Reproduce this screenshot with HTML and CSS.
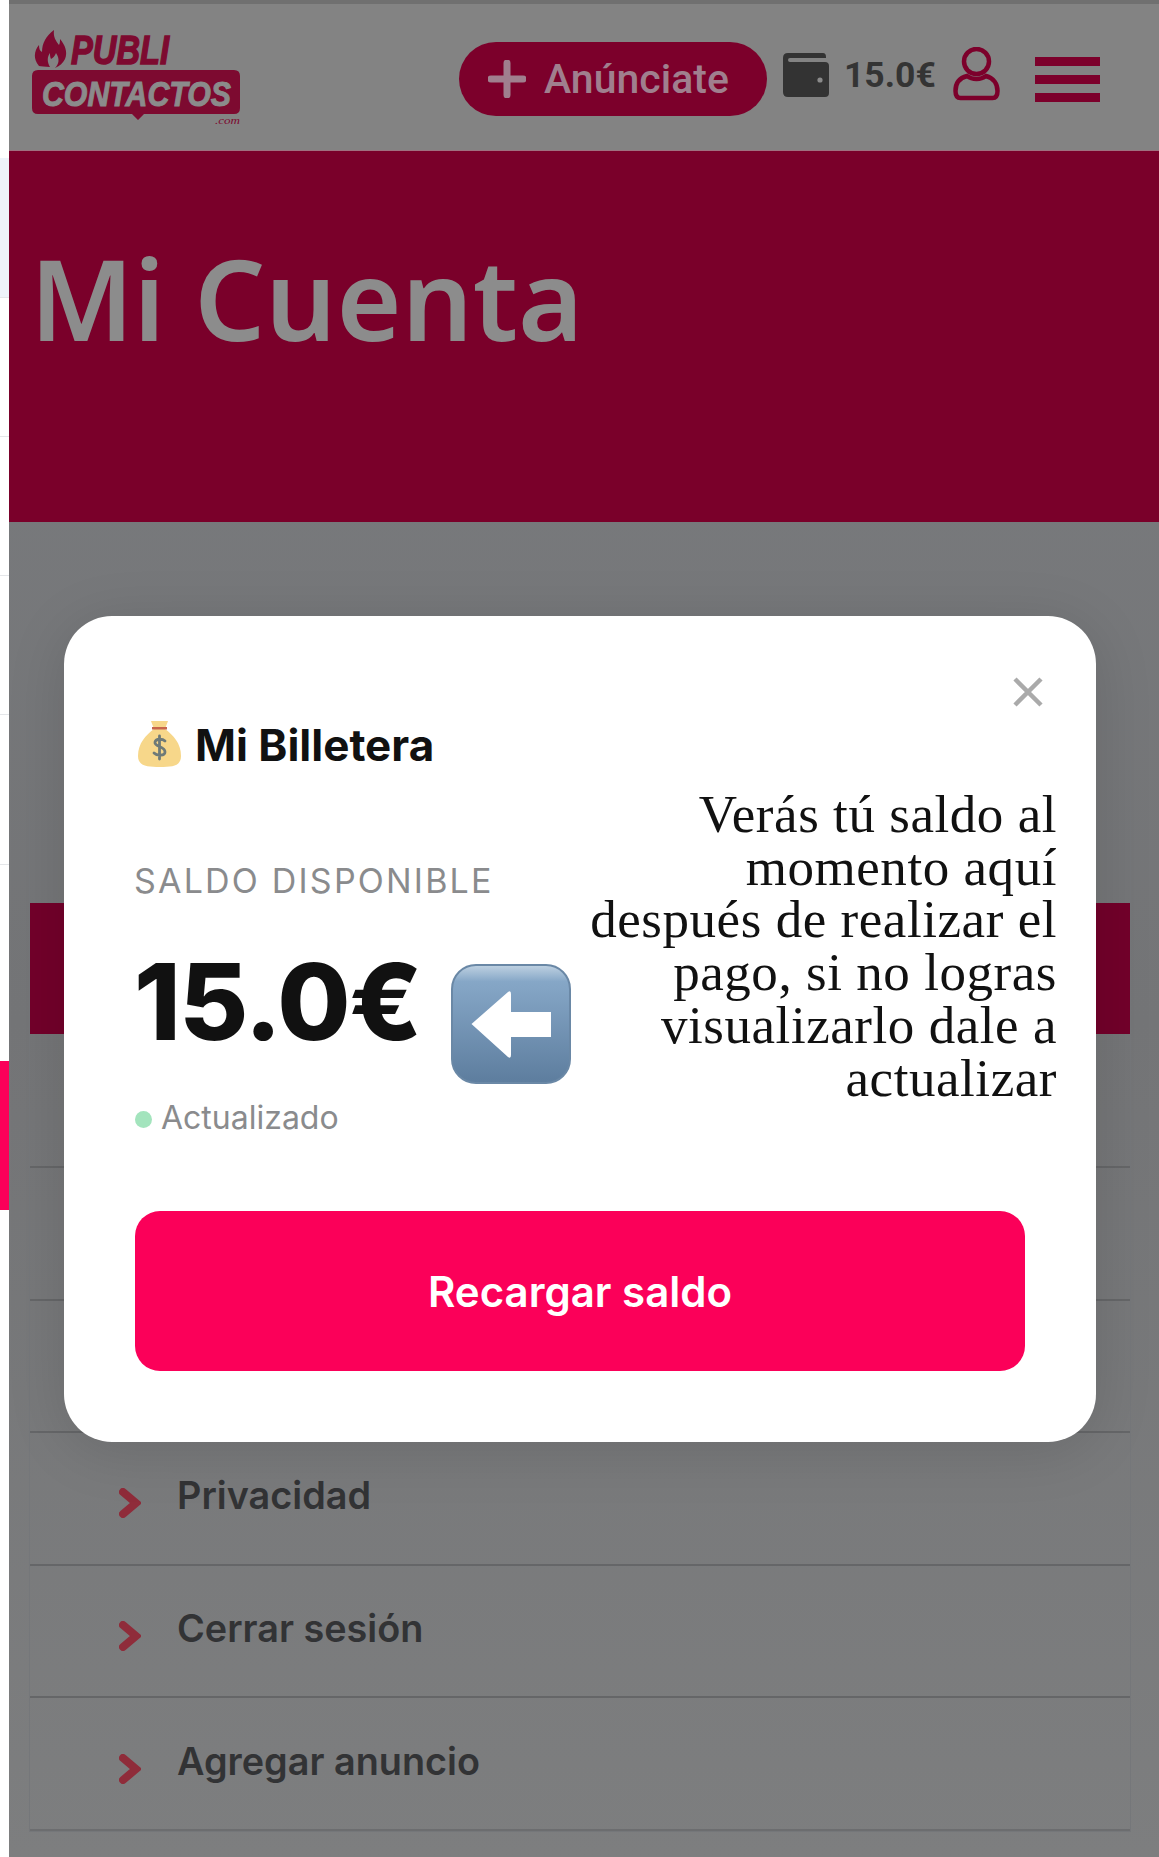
FILE: index.html
```html
<!DOCTYPE html>
<html lang="es">
<head>
<meta charset="utf-8">
<title>Mi Cuenta</title>
<link rel="stylesheet" href="styles.css">
</head>
<body>
<div class="page">
  <aside class="strip">
    <div class="strip-top"></div>
    <div class="strip-row tint"></div>
    <div class="strip-row"></div>
    <div class="strip-row"></div>
    <div class="strip-row"></div>
    <div class="strip-row tall"></div>
    <div class="strip-gap"></div>
    <div class="strip-pink"></div>
  </aside>
  <main class="main">
    <div class="topband"></div>
    <header class="header">
      <svg class="logo" viewBox="0 0 209 95" aria-label="Publi Contactos">
        <path class="logo-red" d="M6 36C0 29 1 21 6 15c0 4 1 6 3 7C9 13 13 6 21 0c-1 7 2 11 5 15 1-2 1-4 1-6 5 6 8 13 5 20-2 4-5 7-10 9 4-4 5-9 1-15-1 3-3 5-5 6-1-2-1-4-1-6-3 4-3 9 0 14-5 0-9-1-11-1z"/>
        <text class="logo-publi" x="38" y="34" textLength="98" lengthAdjust="spacingAndGlyphs">PUBLI</text>
        <path class="logo-red" d="M6 37h196q6 0 6 6v32q0 6-6 6H112l-6 6-6-6H6q-6 0-6-6V43q0-6 6-6z" transform="translate(-1 3)"/>
        <text class="logo-contactos" x="9" y="76" textLength="189" lengthAdjust="spacingAndGlyphs">CONTACTOS</text>
        <text class="logo-com" x="182" y="94" textLength="25" lengthAdjust="spacingAndGlyphs">.com</text>
      </svg>
      <a class="cta">
        <svg class="cta-plus" viewBox="0 0 38 38"><path d="M19 3v32M3 19h32"/></svg>
        <span>Anúnciate</span>
      </a>
      <svg class="wallet" viewBox="0 0 46 44"><path d="M5 0h35q3 0 3 4v1H7q-2 0-2 2t2 2h35q4 0 4 4v27q0 4-4 4H5q-5 0-5-5V5q0-5 5-5z"/><circle class="wallet-dot" cx="37" cy="27" r="2.6"/></svg>
      <span class="balance">15.0€</span>
      <svg class="user" viewBox="0 0 47 54"><circle cx="23.500" cy="14.500" r="12.500"/><path d="M14 29C6 31 2.500 37 2.500 44q0 7 5 7h32q5 0 5-7c0-7-4-13-11.500-15q-4 3-9.500 3t-9.500-3z"/></svg>
      <div class="burger"><i></i><i></i><i></i></div>
    </header>
    <section class="hero"><h1>Mi Cuenta</h1></section>
    <section class="content">
      <ul class="menu">
        <li class="item first"></li>
        <li class="item active"></li>
        <li class="item short"></li>
        <li class="item"></li>
        <li class="item"></li>
        <li class="item"><svg class="chev" viewBox="0 0 22 30"><path d="M4 4l13 11L4 26"/></svg><span>Privacidad</span></li>
        <li class="item"><svg class="chev" viewBox="0 0 22 30"><path d="M4 4l13 11L4 26"/></svg><span>Cerrar sesión</span></li>
        <li class="item"><svg class="chev" viewBox="0 0 22 30"><path d="M4 4l13 11L4 26"/></svg><span>Agregar anuncio</span></li>
      </ul>
    </section>
  </main>
</div>
<div class="modal">
  <svg class="close" viewBox="0 0 30 30"><path d="M2 2l26 26M28 2L2 28"/></svg>
  <h2 class="title">
    <svg class="bag" viewBox="0 0 43 47">
      <path fill="#f7d78a" d="M13 1h17l-3 8c8 6 16 14 16 27 0 10-8 11-21 11S0 46 0 36C0 23 8 15 16 9z"/>
      <path fill="#c8664c" d="M14 7h15v2.500H14z"/>
      <path class="bag-s" d="M27 21c-2-2-9-3-10 1-1 5 10 4 10 10 0 4-8 4-11 1M21.500 16v23"/>
    </svg>
    Mi Billetera
  </h2>
  <p class="label">SALDO DISPONIBLE</p>
  <div class="amount-row">
    <span class="amount">15.0€</span>
    <svg class="arrow" viewBox="0 0 120 120">
      <defs><linearGradient id="arrowFill" x1="0" y1="0" x2="0" y2="1"><stop offset="0" stop-color="#c0d2e2"/><stop offset=".14" stop-color="#86a7c7"/><stop offset="1" stop-color="#5d7d9e"/></linearGradient></defs>
      <rect x="1" y="1" width="118" height="118" rx="24" fill="url(#arrowFill)" stroke="#6a88a6" stroke-width="2"/>
      <path fill="#fff" d="M20.500 60L57 28q3-2 3 2v18h40v25H60v18q0 4-3 2z"/>
    </svg>
  </div>
  <p class="status"><i class="dot"></i>Actualizado</p>
  <p class="note">Verás tú saldo al<br>momento aquí<br>después de realizar el<br>pago, si no logras<br>visualizarlo dale a<br>actualizar</p>
  <a class="recharge">Recargar saldo</a>
</div>
</body>
</html>
```
FILE: styles.css
```css
* { box-sizing: border-box; }
html, body { margin: 0; padding: 0; }
body { width: 1159px; height: 1857px; overflow: hidden; background: #7b7c7e; font-family: "Inter", "Liberation Sans", sans-serif; position: relative; }
.page { display: flex; height: 1857px; }
.strip { width: 9px; flex: none; background: #fff; display: flex; flex-direction: column; }
.strip-top { height: 158px; }
.strip-row { height: 139px; border-bottom: 1px solid #e4e6e9; background: #fff; }
.strip-row.tint { height: 140px; background: #eef3fa; }
.strip-row.tall { height: 150px; }
.strip-gap { height: 196px; }
.strip-pink { height: 149px; background: #fb0059; }
.main { flex: 1; display: flex; flex-direction: column; min-width: 0; background: linear-gradient(#7a7c7f, #747577 55%, #7d7e7f); }
.topband { height: 4px; background: #707070; }
.header { height: 147px; flex: none; background: #838383; display: flex; align-items: center; position: relative; padding-left: 24px; border-bottom: 1px solid #a0707f; }
.logo { width: 209px; height: 95px; flex: none; overflow: visible; }
.logo-red { fill: #7d0a30; }
.logo-publi { font: italic 700 41px "Liberation Sans", sans-serif; fill: #7d0a30; stroke: #7d0a30; stroke-width: 1.500px; }
.logo-contactos { font: italic 700 35px "Liberation Sans", sans-serif; fill: #8b8b8b; stroke: #8b8b8b; stroke-width: 1px; }
.logo-com { font: italic 400 11px "Liberation Serif", serif; fill: #7d0a30; }
.cta { width: 308px; height: 74px; margin-left: 217px; margin-top: 3px; flex: none; border-radius: 37px; background: #7c002b; display: flex; align-items: center; padding-left: 29px; gap: 18px; color: #a07f8e; font: 500 41px "Roboto", sans-serif; }
.cta-plus { width: 38px; height: 38px; flex: none; }
.cta-plus path { fill: none; stroke: #a07f8e; stroke-width: 7; stroke-linecap: round; }
.wallet { width: 46px; height: 44px; flex: none; margin-left: 16px; margin-top: -4px; fill: #333; }
.wallet-dot { fill: #8a8a8a; }
.balance { margin-left: 15px; margin-top: -5px; font: 700 35.500px "Roboto", sans-serif; color: #343434; flex: none; }
.user { width: 47px; height: 54px; flex: none; margin-left: 17px; margin-top: -7px; fill: none; stroke: #7c002b; stroke-width: 4.500; }
.burger { width: 65px; height: 45px; flex: none; margin-left: 35px; margin-top: 5px; display: flex; flex-direction: column; justify-content: space-between; }
.burger i { display: block; height: 9px; background: #7c002b; }
.hero { height: 371px; flex: none; background: #7a002a; padding: 81px 0 0 21px; }
.hero h1 { margin: 0; font: 600 111.500px/1.2 "Noto Sans", sans-serif; color: #8c8c8c; }
.content { flex: 1; padding: 208px 28px 0 20px; }
.menu { list-style: none; margin: 0; padding: 0; border: 1px solid #75777a; }
.item { height: 132.600px; display: flex; align-items: center; border-bottom: 2px solid #656668; padding-left: 89px; font: 600 37.800px "Inter", sans-serif; color: #323335; background: transparent; }
.item:last-child { border-bottom: 2px solid #6c6d6f; }
.item span { margin-top: -6px; margin-left: 36px; }
.item.first { height: 172px; border-bottom: 0; }
.item.active { height: 131px; background: #72002a; border-bottom: 0; }
.item.short { height: 134px; }
.chev { width: 22px; height: 30px; flex: none; margin-top: 10px; }
.chev path { fill: none; stroke: #8f2c3a; stroke-width: 8; stroke-linecap: round; stroke-linejoin: miter; }
.modal { position: absolute; left: 64px; top: 616px; width: 1032px; height: 826px; border-radius: 48px; background: #fff; color: #111; box-shadow: 0 8px 60px rgba(0, 0, 0, .12); }
.close { position: absolute; left: 949px; top: 60px; width: 30px; height: 32px; }
.close path { fill: none; stroke: #aaa; stroke-width: 4.500; }
.title { position: absolute; left: 74px; top: 105px; margin: 0; display: flex; align-items: center; gap: 14px; font: 700 44px/48px "Inter", sans-serif; color: #111; }
.bag { width: 43px; height: 47px; flex: none; margin-top: -4px; }
.bag-s { fill: none; stroke: #6e7a78; stroke-width: 2.800; stroke-linecap: round; }
.label { position: absolute; left: 70px; top: 245px; margin: 0; font: 400 34px/40px "Inter", sans-serif; letter-spacing: 2.200px; color: #8a8b8d; }
.amount-row { position: absolute; left: 70px; top: 326px; display: flex; align-items: flex-start; }
.amount { font: 800 106px/120px "Inter", sans-serif; letter-spacing: -1.500px; color: #111; width: 317px; white-space: nowrap; }
.arrow { width: 120px; height: 120px; flex: none; margin-top: 22px; }
.status { position: absolute; left: 71px; top: 482px; margin: 0; display: flex; align-items: center; gap: 9px; font: 400 32px/40px "Inter", sans-serif; color: #8a8b8d; }
.dot { width: 17px; height: 17px; border-radius: 50%; background: #a3e4bd; flex: none; margin-top: 3px; }
.note { position: absolute; right: 39px; top: 172px; margin: 0; text-align: right; font: 400 53px/52.700px "Liberation Serif", serif; letter-spacing: .55px; color: #111; white-space: nowrap; }
.recharge { position: absolute; left: 71px; top: 595px; width: 890px; height: 160px; border-radius: 25px; background: #fb0059; color: #fff; display: flex; align-items: center; justify-content: center; font: 600 42px "Inter", sans-serif; }
```
